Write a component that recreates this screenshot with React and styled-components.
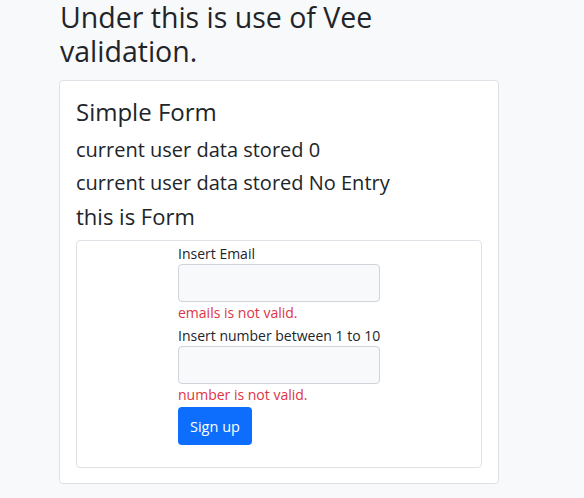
import React from "react";
import styled, { createGlobalStyle } from "styled-components";

const GlobalStyle = createGlobalStyle`
  * { box-sizing: border-box; }
  body {
    margin: 0;
    background: #f8f9fa;
    font-family: "Open Sans", Lato, sans-serif;
    color: #212529;
  }
`;

const Page = styled.div`
  width: 440px;
  margin-left: 59px;
`;

const Title = styled.h1`
  font-size: 28.5px;
  font-weight: 400;
  line-height: 34px;
  margin: 0 0 12px 1px;
`;

const Card = styled.div`
  background: #fff;
  border: 1px solid #dee2e6;
  border-radius: 4px;
  padding: 14px 16px 15px;
`;

const CardTitle = styled.h3`
  font-size: 24px;
  font-weight: 400;
  line-height: 34px;
  margin: 0 0 4px;
`;

const Info = styled.p`
  font-size: 20px;
  line-height: 33px;
  margin: 0;
`;

const FormTitle = styled.h4`
  font-size: 22px;
  font-weight: 400;
  line-height: 34px;
  margin: 0 0 7px;
`;

const FormBox = styled.div`
  border: 1px solid #dee2e6;
  border-radius: 4px;
  padding: 2px 0 22px;
  display: flex;
  justify-content: center;
`;

const Column = styled.form`
  width: 202px;
  display: flex;
  flex-direction: column;
  align-items: flex-start;
`;

const Label = styled.label`
  font-size: 14px;
  line-height: 21px;
  white-space: nowrap;
`;

const Input = styled.input`
  width: 100%;
  height: 38px;
  background: #f8f9fa;
  border: 1px solid #ced4da;
  border-radius: 4px;
`;

const Error = styled.div`
  color: #dc3545;
  font-size: 14px;
  line-height: 22px;
  margin: 0 0 1px;
`;

const Button = styled.button`
  background: #0d6efd;
  color: #fff;
  border: none;
  border-radius: 4px;
  font-family: inherit;
  font-size: 14.5px;
  height: 38px;
  padding: 0 12px;
`;

export default function App() {
  return (
    <>
      <GlobalStyle />
      <Page>
        <Title>Under this is use of Vee validation.</Title>
        <Card>
          <CardTitle>Simple Form</CardTitle>
          <Info>current user data stored 0</Info>
          <Info>current user data stored No Entry</Info>
          <FormTitle>this is Form</FormTitle>
          <FormBox>
            <Column onSubmit={(e) => e.preventDefault()}>
              <Label>Insert Email</Label>
              <Input type="text" />
              <Error>emails is not valid.</Error>
              <Label>Insert number between 1 to 10</Label>
              <Input type="text" />
              <Error>number is not valid.</Error>
              <Button type="submit">Sign up</Button>
            </Column>
          </FormBox>
        </Card>
      </Page>
    </>
  );
}
